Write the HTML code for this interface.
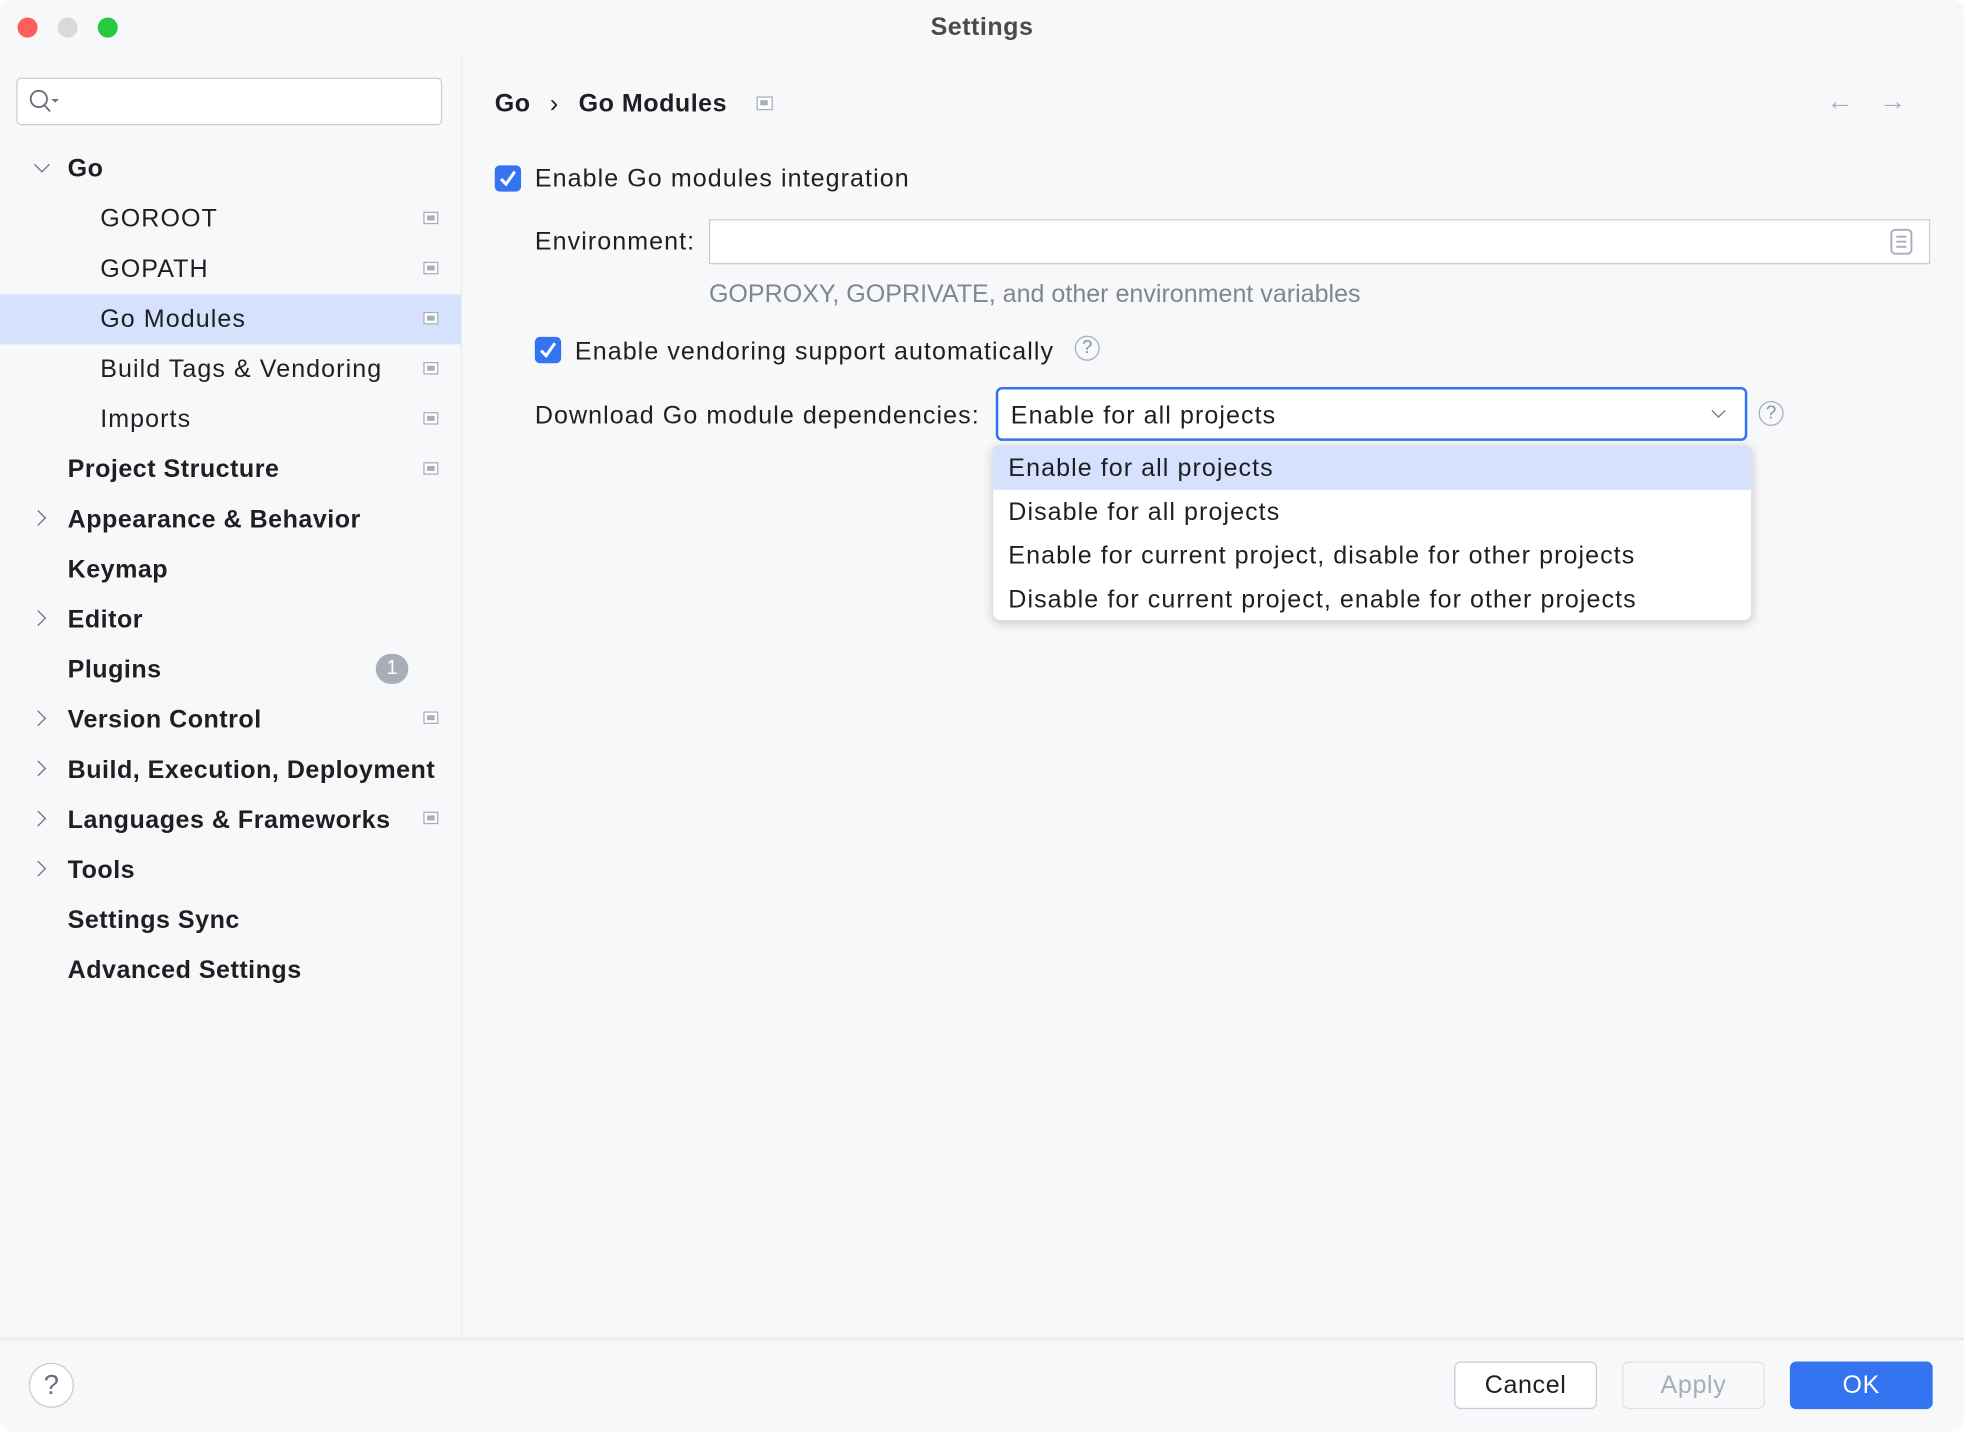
<!DOCTYPE html>
<html><head><meta charset="utf-8"><style>
html,body{margin:0;padding:0;width:1964px;height:1432px;overflow:hidden;background:#fff}
#w{position:absolute;left:0;top:0;width:1568px;height:1143px;transform:scale(1.25255);transform-origin:0 0;background:#f7f8fa;font-family:"Liberation Sans",sans-serif;color:#1e1f22;border-radius:10px;overflow:hidden}
.a{position:absolute;white-space:nowrap}
.t{font-size:20px;line-height:24px;letter-spacing:0.85px;margin-top:1px}
.b{font-weight:bold;letter-spacing:0.4px}
.row{position:absolute;left:0;width:368px;height:40px}
.ic{position:absolute;width:10px;height:8px;border:1.5px solid #a8adbd;background:#fff}
.ic:after{content:"";position:absolute;left:2px;top:2px;width:6px;height:4px;background:#a8adbd}
.chev{position:absolute;width:8px;height:8px;border-right:1.5px solid #6c707e;border-bottom:1.5px solid #6c707e}
.cb{position:absolute;width:21px;height:21px;background:#3574f0;border-radius:4px}
.help{position:absolute;width:18px;height:18px;border:1.5px solid #a8adbd;border-radius:50%;color:#8c90a0;font-size:15px;line-height:18px;text-align:center}
.btn{position:absolute;top:1087px;width:112px;height:36px;border-radius:5px;font-size:20px;line-height:36px;text-align:center;letter-spacing:0.5px}
</style></head><body><div id="w">
<div class="a" style="left:14px;top:14px;width:16px;height:16px;border-radius:50%;background:#fe5f57"></div>
<div class="a" style="left:46px;top:14px;width:16px;height:16px;border-radius:50%;background:#d9d9db"></div>
<div class="a" style="left:78px;top:14px;width:16px;height:16px;border-radius:50%;background:#28c840"></div>
<div class="a t b" style="left:0;width:1568px;text-align:center;top:9px;color:#4a4a4a">Settings</div>
<div class="a" style="left:368px;top:45px;width:1px;height:1023px;background:#ebecf0"></div>
<div class="a" style="left:0;top:1068px;width:1568px;height:2px;background:#ebecf0"></div>
<div class="a" style="left:13px;top:62px;width:338px;height:36px;background:#fff;border:1.5px solid #c9ccd6;border-radius:4px"></div>
<svg class="a" style="left:22px;top:71px" width="30" height="22"><circle cx="9" cy="8" r="6.5" fill="none" stroke="#6c707e" stroke-width="1.5"/><path d="M13.5 13 L18 18" stroke="#6c707e" stroke-width="1.5"/><path d="M19 8 L25 8 L22 11Z" fill="#6c707e"/></svg>
<div class="row" style="top:235px;background:#d5e1fd"></div>
<div class="chev" style="left:29px;top:127px;transform:rotate(45deg)"></div>
<div class="a t b" style="left:54px;top:122px">Go</div>
<div class="a t" style="left:80px;top:162px">GOROOT</div><div class="ic" style="left:338px;top:169px"></div>
<div class="a t" style="left:80px;top:202px">GOPATH</div><div class="ic" style="left:338px;top:209px"></div>
<div class="a t" style="left:80px;top:242px">Go Modules</div><div class="ic" style="left:338px;top:249px"></div>
<div class="a t" style="left:80px;top:282px">Build Tags &amp; Vendoring</div><div class="ic" style="left:338px;top:289px"></div>
<div class="a t" style="left:80px;top:322px">Imports</div><div class="ic" style="left:338px;top:329px"></div>
<div class="a t b" style="left:54px;top:362px">Project Structure</div><div class="ic" style="left:338px;top:369px"></div>
<div class="chev" style="left:26px;top:409px;transform:rotate(-45deg)"></div>
<div class="a t b" style="left:54px;top:402px">Appearance &amp; Behavior</div>
<div class="a t b" style="left:54px;top:442px">Keymap</div>
<div class="chev" style="left:26px;top:489px;transform:rotate(-45deg)"></div>
<div class="a t b" style="left:54px;top:482px">Editor</div>
<div class="a t b" style="left:54px;top:522px">Plugins</div>
<div class="a" style="left:300px;top:522px;width:26px;height:24px;border-radius:12px;background:#a8adb8;color:#fff;font-size:16px;line-height:24px;text-align:center">1</div>
<div class="chev" style="left:26px;top:569px;transform:rotate(-45deg)"></div>
<div class="a t b" style="left:54px;top:562px">Version Control</div><div class="ic" style="left:338px;top:568px"></div>
<div class="chev" style="left:26px;top:609px;transform:rotate(-45deg)"></div>
<div class="a t b" style="left:54px;top:602px">Build, Execution, Deployment</div>
<div class="chev" style="left:26px;top:649px;transform:rotate(-45deg)"></div>
<div class="a t b" style="left:54px;top:642px">Languages &amp; Frameworks</div><div class="ic" style="left:338px;top:648px"></div>
<div class="chev" style="left:26px;top:689px;transform:rotate(-45deg)"></div>
<div class="a t b" style="left:54px;top:682px">Tools</div>
<div class="a t b" style="left:54px;top:722px">Settings Sync</div>
<div class="a t b" style="left:54px;top:762px">Advanced Settings</div>

<div class="a t b" style="left:395px;top:70px">Go</div>
<div class="a t" style="left:439px;top:70px">›</div>
<div class="a t b" style="left:462px;top:70px">Go Modules</div>
<div class="ic" style="left:604px;top:77px;width:11px;height:9px"></div>
<div class="a" style="left:1458px;top:68px;font-size:22px;color:#a8adbd">←</div>
<div class="a" style="left:1500px;top:68px;font-size:22px;color:#a8adbd">→</div>

<div class="cb" style="left:395px;top:132px"><svg width="21" height="21"><path d="M5 11 L9 15 L16 5" fill="none" stroke="#fff" stroke-width="2.4"/></svg></div>
<div class="a t" style="left:427px;top:130px">Enable Go modules integration</div>
<div class="a t" style="left:427px;top:180px">Environment:</div>
<div class="a" style="left:566px;top:175px;width:973px;height:34px;background:#fff;border:1.5px solid #c9ccd6"></div>
<svg class="a" style="left:1508px;top:182px" width="20" height="22"><rect x="2" y="1.5" width="16" height="19" rx="3" fill="none" stroke="#a8adbd" stroke-width="1.5"/><path d="M6 7H14M6 11H14M6 15H14" stroke="#a8adbd" stroke-width="1.5"/></svg>
<div class="a t" style="left:566px;top:222px;color:#818594;letter-spacing:0">GOPROXY, GOPRIVATE, and other environment variables</div>
<div class="cb" style="left:427px;top:269px"><svg width="21" height="21"><path d="M5 11 L9 15 L16 5" fill="none" stroke="#fff" stroke-width="2.4"/></svg></div>
<div class="a t" style="left:459px;top:268px">Enable vendoring support automatically</div>
<div class="help" style="left:858px;top:268px">?</div>
<div class="a t" style="left:427px;top:319px">Download Go module dependencies:</div>
<div class="a" style="left:795px;top:309px;width:596px;height:39px;background:#fff;border:2px solid #3574f0;border-radius:5px"></div>
<div class="a t" style="left:807px;top:319px">Enable for all projects</div>
<div class="chev" style="left:1368px;top:324px;transform:rotate(45deg);width:7px;height:7px"></div>
<div class="help" style="left:1404px;top:320px">?</div>

<div class="a" style="left:792px;top:355px;width:605px;height:139px;background:#fff;border-radius:7px;box-shadow:0 2px 8px rgba(0,0,0,.18);border:1px solid #dfe1e5;overflow:hidden">
<div class="a" style="left:0;top:0;width:605px;height:35px;background:#d5e1fd"></div>
<div class="a t" style="left:12px;top:5px">Enable for all projects</div>
<div class="a t" style="left:12px;top:40px">Disable for all projects</div>
<div class="a t" style="left:12px;top:75px">Enable for current project, disable for other projects</div>
<div class="a t" style="left:12px;top:110px">Disable for current project, enable for other projects</div>
</div>

<div class="a" style="left:23px;top:1088px;width:34px;height:34px;border:1.5px solid #c9ccd6;border-radius:50%;background:#fff;color:#6c707e;font-size:22px;line-height:34px;text-align:center">?</div>
<div class="btn" style="left:1161px;background:#fff;border:1.5px solid #c9ccd6">Cancel</div>
<div class="btn" style="left:1295px;border:1.5px solid #dfe1e5;color:#a8adbd">Apply</div>
<div class="btn" style="left:1429px;background:#3574f0;color:#fff;width:114px;height:38px;line-height:38px">OK</div>
</div></body></html>
